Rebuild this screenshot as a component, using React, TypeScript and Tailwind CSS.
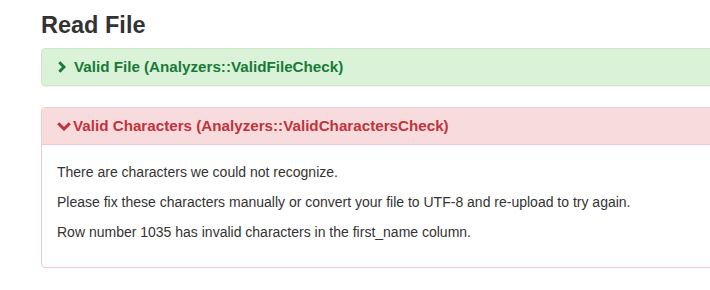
import React from "react";

interface Check {
  label: string;
  ok: boolean;
  messages?: string[];
}

const checks: Check[] = [
  { label: "Valid File (Analyzers::ValidFileCheck)", ok: true },
  {
    label: "Valid Characters (Analyzers::ValidCharactersCheck)",
    ok: false,
    messages: [
      "There are characters we could not recognize.",
      "Please fix these characters manually or convert your file to UTF-8 and re-upload to try again.",
      "Row number 1035 has invalid characters in the first_name column.",
    ],
  },
];

function ChevronRight() {
  return (
    <svg width="8" height="12" viewBox="0 0 8 12" className="shrink-0">
      <polyline points="1.3,1.2 6,6 1.3,10.8" fill="none" stroke="currentColor" strokeWidth="3" />
    </svg>
  );
}

function ChevronDown() {
  return (
    <svg width="14" height="9" viewBox="0 0 14 9" className="shrink-0">
      <polyline points="1.2,1.2 7,7 12.8,1.2" fill="none" stroke="currentColor" strokeWidth="3" />
    </svg>
  );
}

export default function App() {
  return (
    <div
      className="w-[710px] h-[290px] overflow-hidden bg-white text-[#333]"
      style={{ fontFamily: '"Liberation Sans", Arial, sans-serif' }}
    >
      <div className="pl-[41px] w-[760px]">
        <h3 className="pt-[12px] mb-[10px] text-[23.5px] leading-[26px] font-bold text-[#333]">Read File</h3>

        {checks.map((c) =>
          c.ok ? (
            <div
              key={c.label}
              className="mb-[21px] rounded-[4px] border border-[#cdeac7] bg-[#daf2d8] shadow-[0_1px_1px_rgba(0,0,0,0.05)]"
            >
              <div className="flex items-center pl-[16px] pr-[15px] py-[9px] text-[#187a37]">
                <ChevronRight />
                <span className="ml-[8px] text-[15.2px] leading-[18px] font-bold">{c.label}</span>
              </div>
            </div>
          ) : (
            <div key={c.label} className="mb-[20px] rounded-[4px] border border-[#f0c9ce] bg-white">
              <div className="flex items-center pl-[15px] pr-[15px] py-[9px] bg-[#f8dcdd] border-b border-[#f0c9ce] rounded-t-[4px] text-[#c1333b]">
                <ChevronDown />
                <span className="ml-[2px] text-[15.2px] leading-[18px] font-bold">{c.label}</span>
              </div>
              <div className="px-[15px] pt-[17px] pb-[15px] text-[14px] leading-[20px]">
                {c.messages?.map((m) => (
                  <p key={m} className="mb-[10px]">
                    {m}
                  </p>
                ))}
              </div>
            </div>
          )
        )}
      </div>
    </div>
  );
}
